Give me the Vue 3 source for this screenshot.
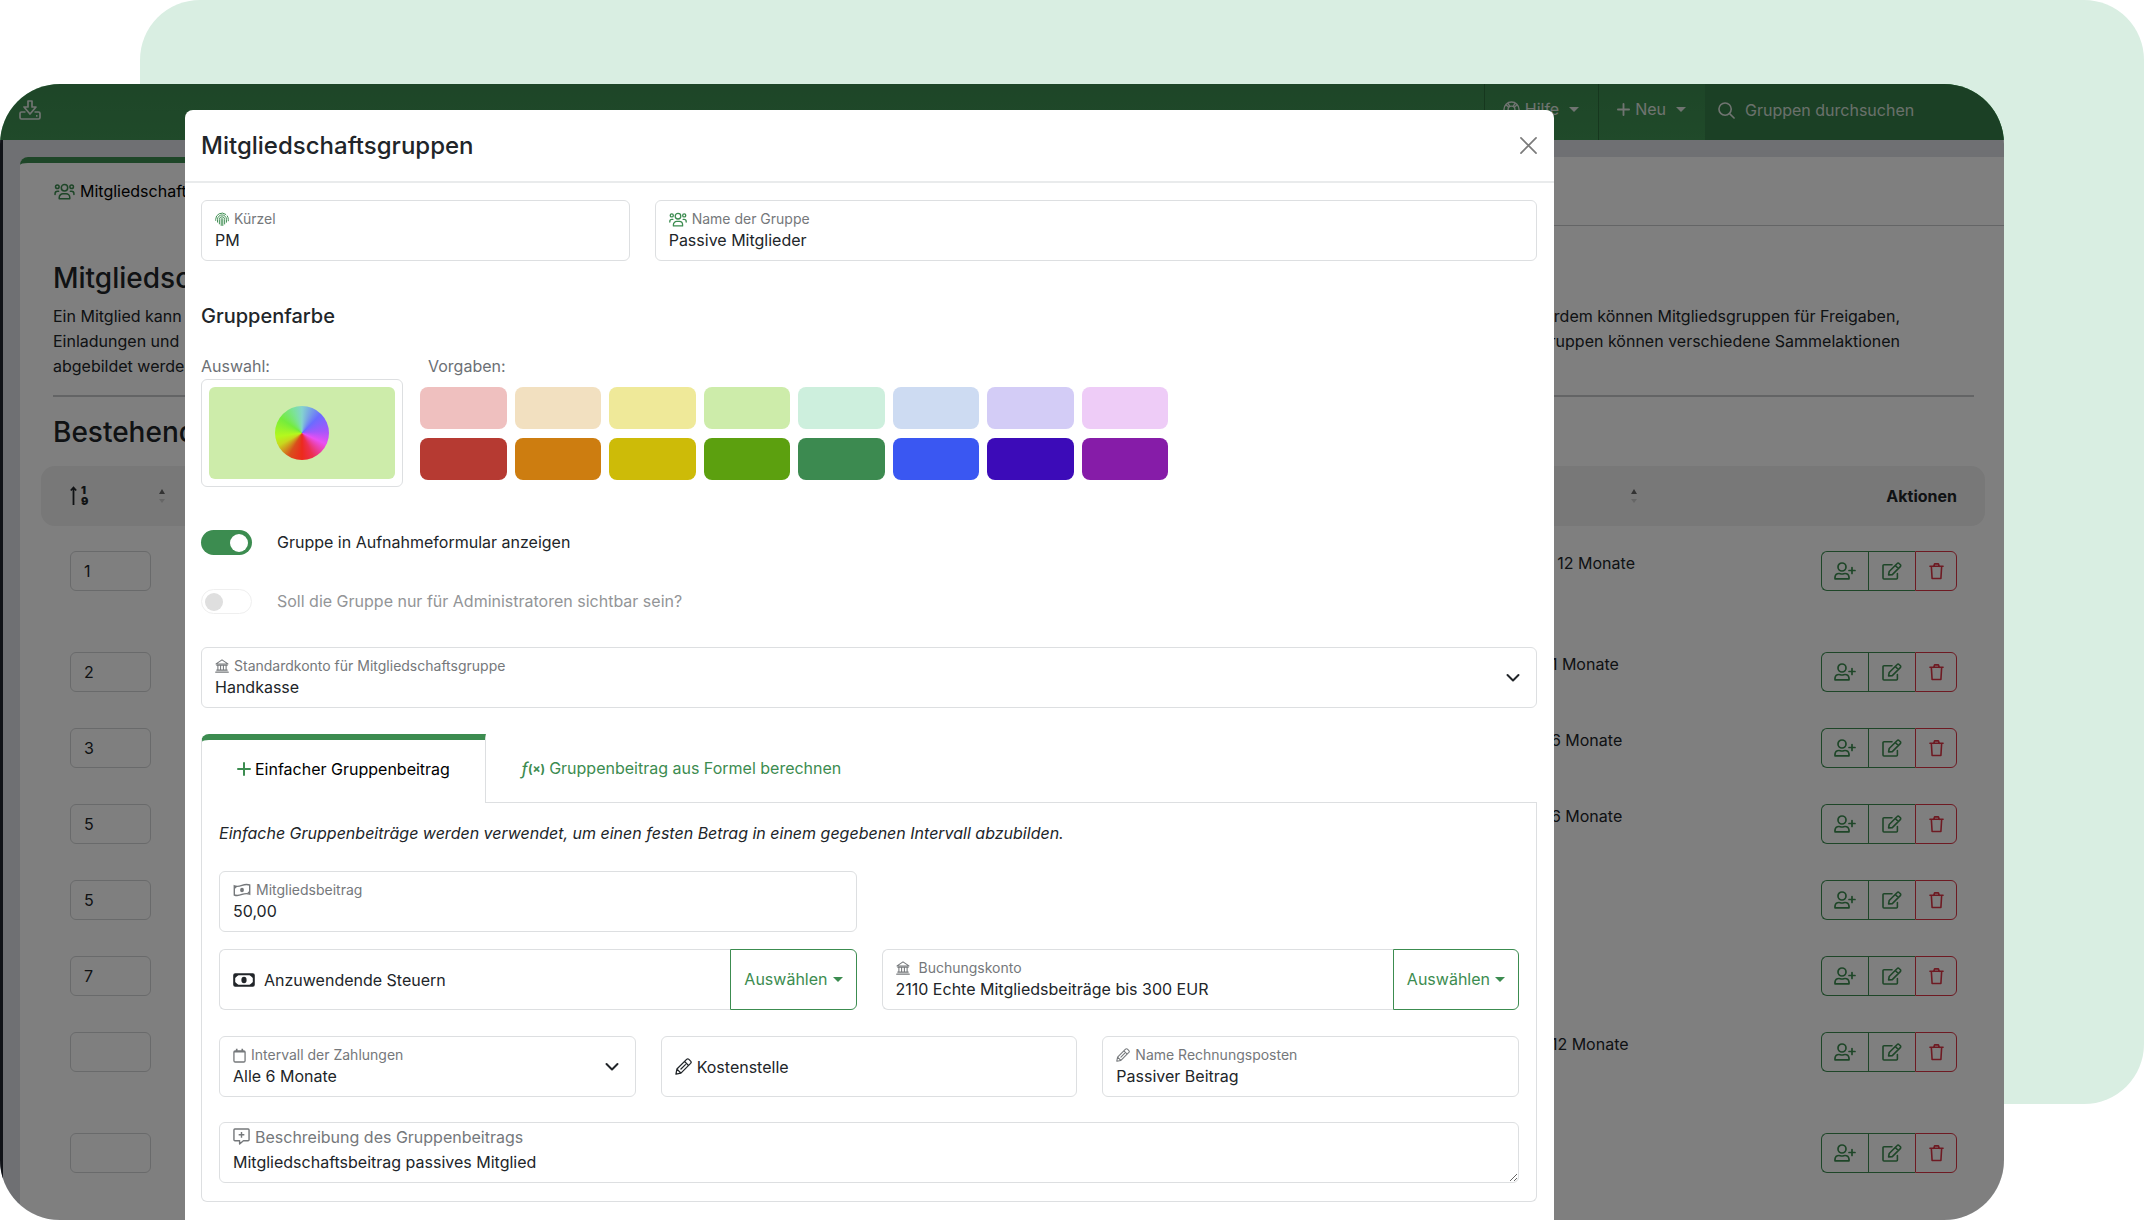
<script setup>
import { ref } from 'vue'

const rows = [
  { nr: '1', interval: '50,00 € / alle 12 Monate', tall: true },
  { nr: '2', interval: '11,00 € / alle 1 Monate' },
  { nr: '3', interval: '11,00 € / alle 6 Monate' },
  { nr: '5', interval: '11,00 € / alle 6 Monate' },
  { nr: '5', interval: '' },
  { nr: '7', interval: '' },
  { nr: '', interval: '11,00 € / alle 12 Monate', tall: true },
  { nr: '', interval: '' },
]

const swatches = [
  '#efc0bf', '#f2e0c0', '#efe999', '#cdecaa', '#cdefdd', '#cddbf2', '#d3ccf6', '#eeccf7',
  '#b63a32', '#cd7d10', '#cdbb08', '#5ca00f', '#3c8a50', '#3a57f2', '#3c0bb8', '#861ca8',
]

const selected = ref('#cdecaa')
const showInForm = ref(true)
const adminsOnly = ref(false)
const shortName = ref('PM')
const groupName = ref('Passive Mitglieder')
const fee = ref('50,00')
const account = ref('2110 Echte Mitgliedsbeiträge bis 300 EUR')
const taxes = ref('')
const costCenter = ref('')
const itemName = ref('Passiver Beitrag')
const description = ref('Mitgliedschaftsbeitrag passives Mitglied')
</script>

<template>
  <div class="page">
    <svg class="defs" width="0" height="0" aria-hidden="true">
      <symbol id="i-users" viewBox="0 0 22 18">
        <g fill="none" stroke="currentColor" stroke-width="1.6" stroke-linecap="round" stroke-linejoin="round">
          <circle cx="11" cy="5" r="3.4" /><circle cx="3.4" cy="4" r="1.9" /><circle cx="18.6" cy="4" r="1.9" />
          <path d="M5.400 16.800v-1.400a4 4 0 0 1 4-4h3.200a4 4 0 0 1 4 4v1.400z M1 12.200v-.8a2.600 2.600 0 0 1 2.600-2.600h1.200 M21 12.200v-.8a2.600 2.600 0 0 0-2.600-2.600h-1.200" />
        </g>
      </symbol>
      <symbol id="i-finger" viewBox="0 0 16 16">
        <g fill="none" stroke="currentColor" stroke-width="1.1" stroke-linecap="round">
          <path d="M.8 9V7.800A7.200 7.200 0 0 1 12.300 2.100 M14 3.900a7.200 7.200 0 0 1 1.200 4V9.500" />
          <path d="M2.900 11V7.900A5.100 5.100 0 0 1 8 2.800a5.100 5.100 0 0 1 5.100 5.100v3.200" />
          <path d="M5 13V7.900a3 3 0 0 1 6 0v5.200" />
          <path d="M7.100 14.800V7.900a.9.9 0 0 1 1.800 0v7" />
        </g>
      </symbol>
      <symbol id="i-bank" viewBox="0 0 16 16">
        <g fill="none" stroke="currentColor" stroke-width="1.2" stroke-linejoin="round" stroke-linecap="round">
          <path d="M1.200 5.600 8 1l6.800 4.600z M2 7.200h12 M3.300 7.500v5 M6.400 7.500v5 M9.600 7.500v5 M12.700 7.500v5 M2 12.700h12 M.8 15h14.400" />
        </g>
      </symbol>
      <symbol id="i-bill-wave" viewBox="0 0 20 16">
        <path d="M1.200 3.200c3 1.300 5.800.6 8.800-.5s5.800-1.500 8.800-.4v10.500c-3-1.100-5.800-.8-8.800.3s-5.800 1.800-8.800.6z" fill="none" stroke="currentColor" stroke-width="1.600" />
        <ellipse cx="10" cy="8" rx="2.200" ry="2.700" fill="currentColor" />
        <path d="M2 4.200h2.500L2 6.600z M18 12h-2.500L18 9.500z" fill="currentColor" />
      </symbol>
      <symbol id="i-bill" viewBox="0 0 22 16">
        <rect x="1.200" y="2.200" width="19.600" height="11.600" rx="1" fill="none" stroke="currentColor" stroke-width="2" />
        <ellipse cx="11" cy="8" rx="2.600" ry="3.200" fill="currentColor" />
        <path d="M2 3h3.500L2 6z M20 3h-3.500L20 6z M2 13h3.500L2 10z M20 13h-3.500L20 10z" fill="currentColor" />
      </symbol>
      <symbol id="i-calendar" viewBox="0 0 14 16">
        <rect x="1" y="3" width="12" height="12" rx="1.400" fill="none" stroke="currentColor" stroke-width="1.400" />
        <path d="M1 4h12 M4 .8v3 M10 .8v3" fill="none" stroke="currentColor" stroke-width="1.800" />
      </symbol>
      <symbol id="i-pencil" viewBox="0 0 16 16">
        <g fill="none" stroke="currentColor" stroke-width="1.200" stroke-linejoin="round" stroke-linecap="round">
          <path d="M.9 15.100l.9-4.700L10.900 1.300a1.600 1.600 0 0 1 2.200 0l1.600 1.600a1.600 1.600 0 0 1 0 2.200L5.600 14.200z M9 3.300l3.700 3.700 M1.900 10.500l3.600 3.600 M5.600 10.400l4.200-4.200" />
        </g>
      </symbol>
      <symbol id="i-comment" viewBox="0 0 18 18">
        <g fill="none" stroke="currentColor" stroke-width="1.500" stroke-linejoin="round">
          <path d="M2 1h14a1 1 0 0 1 1 1v10.500a1 1 0 0 1-1 1h-5L7 17v-3.500H2a1 1 0 0 1-1-1V2a1 1 0 0 1 1-1z M9 4.200v6 M6 7.200h6" />
        </g>
      </symbol>
      <symbol id="i-user-plus" viewBox="0 0 22 18">
        <g fill="none" stroke="currentColor" stroke-width="1.700" stroke-linejoin="round" stroke-linecap="round">
          <circle cx="8" cy="5" r="4" />
          <path d="M1 16.800V15a4 4 0 0 1 4-3.500c1 0 1.500.5 3 .5s2-.5 3-.5a4 4 0 0 1 4 3.500v1.800z M18 5.500v6 M15 8.500h6" />
        </g>
      </symbol>
      <symbol id="i-edit" viewBox="0 0 20 18">
        <g fill="none" stroke="currentColor" stroke-width="1.600" stroke-linejoin="round" stroke-linecap="round">
          <path d="M10 2.800H2a1 1 0 0 0-1 1V16a1 1 0 0 0 1 1h12.400a1 1 0 0 0 1-1v-4.500 M6.600 12.900l.6-3.400 8-8a1.300 1.300 0 0 1 1.900 0l1.200 1.200a1.300 1.300 0 0 1 0 1.900l-8 8z M13.300 3.500l3 3" />
        </g>
      </symbol>
      <symbol id="i-trash" viewBox="0 0 16 18">
        <g fill="none" stroke="currentColor" stroke-width="1.700" stroke-linejoin="round" stroke-linecap="round">
          <path d="M1 4h14 M5 4l1-2.600h4L11 4 M2.500 4l.8 13h9.400l.8-13" />
        </g>
      </symbol>
      <symbol id="i-plus" viewBox="0 0 14 14">
        <path d="M7 1v12 M1 7h12" fill="none" stroke="currentColor" stroke-width="2" stroke-linecap="round" />
      </symbol>
      <symbol id="i-search" viewBox="0 0 18 18">
        <path d="M12 12l5 5 M7.500 1a6.500 6.500 0 1 1 0 13 6.500 6.500 0 0 1 0-13z" fill="none" stroke="currentColor" stroke-width="1.700" stroke-linecap="round" />
      </symbol>
      <symbol id="i-ring" viewBox="0 0 18 18">
        <g fill="none" stroke="currentColor" stroke-width="1.500">
          <circle cx="9" cy="9" r="8" /><circle cx="9" cy="9" r="3.600" />
          <path d="M3 4l3.200 2.700 M5 2.200l2.200 3.200 M15 4l-3.200 2.700 M13 2.200l-2.200 3.200 M3 14l3.200-2.700 M15 14l-3.200-2.700" />
        </g>
      </symbol>
      <symbol id="i-inbox" viewBox="0 0 22 20">
        <g fill="none" stroke="currentColor" stroke-width="1.700" stroke-linejoin="round">
          <path d="M9 1h4v6h4L11 14 5 7h4z M6.500 12h-4A1.500 1.500 0 0 0 1 13.500v4A1.500 1.500 0 0 0 2.500 19h17a1.500 1.500 0 0 0 1.500-1.500v-4a1.500 1.500 0 0 0-1.500-1.500h-4 M17 15.800h1.500" />
        </g>
      </symbol>
      <symbol id="i-chevron" viewBox="0 0 14 10">
        <path d="M1.500 2l5.500 5.500L12.500 2" fill="none" stroke="currentColor" stroke-width="2" stroke-linecap="round" stroke-linejoin="round" />
      </symbol>
      <symbol id="i-close" viewBox="0 0 18 18">
        <path d="M1 1l16 16 M17 1L1 17" fill="none" stroke="currentColor" stroke-width="1.800" stroke-linecap="round" />
      </symbol>
    </svg>

    <div class="mint"></div>

    <div class="frame">
      <div class="app">
        <header class="topbar">
          <button class="inbox" type="button" aria-label="Posteingang"><svg width="22" height="20"><use href="#i-inbox" /></svg></button>
          <button class="menu" type="button"><svg width="17" height="17"><use href="#i-ring" /></svg>Hilfe<i class="caret"></i></button>
          <button class="menu" type="button"><svg width="13" height="13"><use href="#i-plus" /></svg>Neu<i class="caret"></i></button>
          <div class="search">
            <svg width="17" height="17"><use href="#i-search" /></svg>
            <input type="search" placeholder="Gruppen durchsuchen" aria-label="Gruppen durchsuchen" />
          </div>
        </header>

        <div class="shell">
          <main class="card">
            <nav class="card-tabs">
              <a href="#" class="card-tab"><svg width="21" height="17"><use href="#i-users" /></svg>Mitgliedschaftsgruppen</a>
            </nav>
            <div class="card-body">
              <h1>Mitgliedschaftsgruppen</h1>
              <div class="intro">
                <p><span>Ein Mitglied kann</span><span>Außerdem können Mitgliedsgruppen für Freigaben,</span></p>
                <p><span>Einladungen und</span><span>Gruppen können verschiedene Sammelaktionen</span></p>
                <p><span>abgebildet werden.</span></p>
              </div>
              <hr />
              <h1>Bestehende Gruppen</h1>
            </div>
            <table class="groups">
              <colgroup>
                <col class="c-nr" /><col /><col class="c-int" /><col class="c-act" />
              </colgroup>
              <thead>
                <tr>
                  <th scope="col">
                    <div class="sorter">
                      <span class="numsort">
                        <svg width="7" height="20" viewBox="0 0 7 20"><path d="M3.500 19V2 M.8 4.500l2.700-3 2.700 3" fill="none" stroke="currentColor" stroke-width="1.800" /></svg>
                        <span class="digits"><b>1</b><b>9</b></span>
                      </span>
                      <i class="arrows"></i>
                    </div>
                  </th>
                  <th></th>
                  <th scope="col"><div class="sorter end"><i class="arrows"></i></div></th>
                  <th scope="col" class="right">Aktionen</th>
                </tr>
              </thead>
              <tbody>
                <tr v-for="(row, i) in rows" :key="i" :class="{ tall: row.tall }">
                  <td><input class="nr" type="text" :value="row.nr" :aria-label="'Sortierung ' + (i + 1)" /></td>
                  <td></td>
                  <td class="interval">{{ row.interval }}</td>
                  <td class="right">
                    <div class="actions">
                      <button type="button" aria-label="Mitglied hinzufügen"><svg width="22" height="18"><use href="#i-user-plus" /></svg></button>
                      <button type="button" aria-label="Bearbeiten"><svg width="20" height="18"><use href="#i-edit" /></svg></button>
                      <button type="button" class="danger" aria-label="Löschen"><svg width="15" height="18"><use href="#i-trash" /></svg></button>
                    </div>
                  </td>
                </tr>
              </tbody>
            </table>
          </main>
        </div>
      </div>

      <div class="backdrop"></div>

      <section class="modal" role="dialog" aria-labelledby="dlg-title">
        <header class="modal-head">
          <h2 id="dlg-title">Mitgliedschaftsgruppen</h2>
          <button class="close" type="button" aria-label="Schließen"><svg width="17" height="17"><use href="#i-close" /></svg></button>
        </header>

        <div class="modal-body">
          <div class="row">
            <div class="field span4">
              <label for="f-short"><svg class="green" width="14" height="15"><use href="#i-finger" /></svg>Kürzel</label>
              <input id="f-short" v-model="shortName" type="text" />
            </div>
            <div class="field span8">
              <label for="f-name"><svg class="green" width="18" height="15"><use href="#i-users" /></svg>Name der Gruppe</label>
              <input id="f-name" v-model="groupName" type="text" />
            </div>
          </div>

          <h3>Gruppenfarbe</h3>
          <div class="colors">
            <div class="pick">
              <span class="cap">Auswahl:</span>
              <button class="picker" type="button" aria-label="Farbe wählen">
                <span class="fill" :style="{ background: selected }"><i class="wheel"></i></span>
              </button>
            </div>
            <div class="presets">
              <span class="cap">Vorgaben:</span>
              <div class="grid">
                <button v-for="c in swatches" :key="c" type="button" :aria-label="c" :style="{ background: c }" @click="selected = c"></button>
              </div>
            </div>
          </div>

          <div class="switches">
            <label class="switch"><input v-model="showInForm" type="checkbox" />Gruppe in Aufnahmeformular anzeigen</label>
            <label class="switch off"><input v-model="adminsOnly" type="checkbox" disabled />Soll die Gruppe nur für Administratoren sichtbar sein?</label>
          </div>

          <div class="field">
            <label for="f-acc"><svg width="14" height="14"><use href="#i-bank" /></svg>Standardkonto für Mitgliedschaftsgruppe</label>
            <select id="f-acc"><option>Handkasse</option></select>
            <svg class="chev" width="14" height="10"><use href="#i-chevron" /></svg>
          </div>

          <div class="tabs" role="tablist">
            <button class="tab active" type="button" role="tab" aria-selected="true"><svg class="green" width="14" height="14"><use href="#i-plus" /></svg>Einfacher Gruppenbeitrag</button>
            <button class="tab" type="button" role="tab" aria-selected="false"><span class="fx"><em>ƒ</em><b>(×)</b></span>Gruppenbeitrag aus Formel berechnen</button>
          </div>

          <div class="panel" role="tabpanel">
            <p class="hint">Einfache Gruppenbeiträge werden verwendet, um einen festen Betrag in einem gegebenen Intervall abzubilden.</p>

            <div class="row">
              <div class="field span6">
                <label for="f-fee"><svg width="18" height="14"><use href="#i-bill-wave" /></svg>Mitgliedsbeitrag</label>
                <input id="f-fee" v-model="fee" type="text" />
              </div>
            </div>

            <div class="row">
              <div class="group span6">
                <div class="field empty wide-gap">
                  <label for="f-tax"><svg width="22" height="16"><use href="#i-bill" /></svg>Anzuwendende Steuern</label>
                  <input id="f-tax" v-model="taxes" type="text" />
                </div>
                <button class="choose" type="button">Auswählen<i class="caret"></i></button>
              </div>
              <div class="group span6">
                <div class="field wide-gap">
                  <label for="f-book"><svg width="14" height="14"><use href="#i-bank" /></svg>Buchungskonto</label>
                  <input id="f-book" v-model="account" type="text" />
                </div>
                <button class="choose" type="button">Auswählen<i class="caret"></i></button>
              </div>
            </div>

            <div class="row spaced">
              <div class="field span4">
                <label for="f-int"><svg width="13" height="15"><use href="#i-calendar" /></svg>Intervall der Zahlungen</label>
                <select id="f-int"><option>Alle 6 Monate</option></select>
                <svg class="chev" width="14" height="10"><use href="#i-chevron" /></svg>
              </div>
              <div class="field empty span4">
                <label for="f-cost"><svg width="17" height="17"><use href="#i-pencil" /></svg>Kostenstelle</label>
                <input id="f-cost" v-model="costCenter" type="text" />
              </div>
              <div class="field span4">
                <label for="f-item"><svg width="14" height="14"><use href="#i-pencil" /></svg>Name Rechnungsposten</label>
                <input id="f-item" v-model="itemName" type="text" />
              </div>
            </div>

            <div class="field area">
              <label for="f-desc"><svg width="17" height="17"><use href="#i-comment" /></svg>Beschreibung des Gruppenbeitrags</label>
              <textarea id="f-desc" v-model="description" rows="1"></textarea>
            </div>
          </div>
        </div>
      </section>
    </div>
  </div>
</template>

<style>
body {
  margin: 0;
  background: #fff;
}
</style>

<style scoped>
* {
  box-sizing: border-box;
}
.page {
  --green: #3c8c50;
  --line: #dddfe1;
  display: grid;
  min-height: 100vh;
  font: 400 16px/25px Inter, "Noto Sans", sans-serif;
  color: #212529;
}
.defs {
  position: absolute;
}
button, input, select, textarea {
  font: inherit;
  color: inherit;
  margin: 0;
  padding: 0;
  border: 0;
  background: none;
  outline: none;
}
h1, h2, h3, p {
  margin: 0;
  font-weight: 500;
}
svg {
  flex: none;
  display: block;
}
.green {
  color: var(--green);
}
.caret {
  border: 5px solid transparent;
  border-top-color: currentColor;
  border-bottom: 0;
}
.mint {
  grid-area: 1 / 1;
  margin: 0 0 116px 140px;
  border-radius: 60px;
  background: #d9eee2;
}
.frame {
  grid-area: 1 / 1;
  margin: 84px 140px 0 0;
  border-radius: 60px;
  overflow: hidden;
  display: grid;
}
.app, .backdrop, .modal {
  grid-area: 1 / 1;
  min-width: 0;
}
.backdrop {
  background: rgba(0, 0, 0, 0.5);
}

/* application behind the dialog */
.app {
  display: flex;
  flex-direction: column;
  background: #fff;
}
.topbar {
  display: flex;
  height: 56px;
  background: linear-gradient(#3c8c50, #409454);
  color: #e0e8e2;
}
.inbox {
  margin-right: auto;
  padding: 0 0 5px 19px;
}
.menu {
  display: flex;
  align-items: center;
  gap: 5px;
  padding: 0 19px 5px 18px;
  border-left: 1px solid #2c6f3d;
}
.menu .caret {
  margin-left: 5px;
}
.search {
  display: flex;
  align-items: center;
  gap: 10px;
  width: 299px;
  padding: 0 13px 4px;
  background: #37804a;
}
.search input {
  flex: 1;
  min-width: 0;
}
.search input::placeholder {
  color: #d4e0d7;
  opacity: 1;
}
.shell {
  flex: 1;
  padding: 17px 0 0 17px;
  border-left: 3px solid #20242e;
  background: #dee1e6;
}
.card {
  min-height: 100%;
  background: #fff;
  border-radius: 8px 0 0 0;
}
.card-tabs {
  display: flex;
  height: 69px;
  border-bottom: 1px solid #c8cacc;
}
.card-tab {
  display: flex;
  align-items: center;
  gap: 5px;
  margin-bottom: -1px;
  padding: 0 34px 6px;
  border-top: 6px solid var(--green);
  border-radius: 8px 0 0 0;
  background: #fff;
  color: #000;
  text-decoration: none;
}
.card-tab svg {
  color: var(--green);
}
.card-body {
  padding: 34px 30px 0 33px;
}
h1 {
  font-size: 28px;
  line-height: 36px;
}
.intro {
  padding: 8px 74px 16px 0;
}
.intro p {
  display: flex;
  justify-content: space-between;
  font-weight: 400;
}
hr {
  margin: 0 0 17px;
  border: 0;
  border-top: 2px solid #c6c8ca;
}
.groups {
  width: calc(100% - 40px);
  margin: 16px 19px 0 21px;
  table-layout: fixed;
  border-spacing: 0;
}
.c-nr {
  width: 136px;
}
.c-int {
  width: 196px;
}
.c-act {
  width: 336px;
}
th {
  height: 60px;
  padding: 0 12px 0 29px;
  background: #f0f0f0;
  font-weight: 700;
  text-align: left;
}
th:first-child {
  border-radius: 14px 0 0 14px;
}
th:last-child {
  border-radius: 0 14px 14px 0;
}
td {
  height: 76px;
  padding: 25px 0 0 29px;
  vertical-align: top;
}
.tall td {
  height: 101px;
}
.interval {
  padding-left: 0;
  white-space: nowrap;
}
th.right, td.right {
  padding-right: 28px;
  text-align: right;
}
.sorter {
  display: flex;
  align-items: center;
  justify-content: space-between;
}
.sorter.end {
  justify-content: flex-end;
}
.numsort {
  display: flex;
  align-items: center;
  gap: 4px;
}
.digits {
  display: grid;
  font-size: 11px;
  line-height: 11px;
}
.arrows::before, .arrows::after {
  content: "";
  display: block;
  border: 3px solid transparent;
}
.arrows::before {
  border-bottom: 5px solid #666;
  border-top: 0;
}
.arrows::after {
  margin-top: 5px;
  border-top: 4px solid #ccc;
  border-bottom: 0;
}
.nr {
  display: block;
  width: 81px;
  height: 40px;
  padding: 0 13px;
  border: 1px solid #d2d4d6;
  border-radius: 6px;
}
.actions {
  display: inline-flex;
  vertical-align: top;
  height: 40px;
}
.actions button {
  display: grid;
  place-items: center;
  width: 47px;
  border: 1px solid var(--green);
  border-right: 0;
  color: var(--green);
}
.actions button:first-child {
  border-radius: 6px 0 0 6px;
}
.actions .danger {
  width: 42px;
  border: 1px solid #dc3545;
  border-radius: 0 6px 6px 0;
  color: #dc3545;
}

/* dialog */
.modal {
  margin: 26px 450px 0 185px;
  background: #fff;
  border-radius: 8px 8px 0 0;
}
.modal-head {
  display: flex;
  align-items: center;
  justify-content: space-between;
  height: 73px;
  padding: 0 17px 0 16px;
  border-bottom: 2px solid #e9ebec;
}
.modal-head h2 {
  font-size: 24px;
  line-height: 36px;
}
.close {
  color: #7b7b7b;
}
.modal-body {
  padding: 17px 17px 17px 16px;
}
.row {
  display: grid;
  grid-template-columns: repeat(12, minmax(0, 1fr));
  column-gap: 25px;
}
.span4 {
  grid-column: span 4;
}
.span6 {
  grid-column: span 6;
}
.span8 {
  grid-column: span 8;
}
.field {
  position: relative;
  height: 61px;
  padding: 8px 13px;
  border: 1px solid var(--line);
  border-radius: 6px;
}
.field label {
  display: flex;
  align-items: center;
  gap: 5px;
  height: 20px;
  font-size: 14px;
  line-height: 20px;
  color: #75787b;
}
.field input, .field select {
  display: block;
  width: 100%;
  height: 23px;
  line-height: 23px;
  appearance: none;
}
.field.wide-gap label {
  gap: 9px;
}
.field.empty {
  display: flex;
  align-items: center;
}
.field.empty label {
  flex: none;
  font-size: 16px;
  color: #212529;
}
.chev {
  position: absolute;
  right: 16px;
  top: 25px;
}
.field.area {
  padding: 1px 0 0;
}
.field.area label {
  height: 25px;
  padding: 0 13px;
  font-size: 16px;
}
.field.area textarea {
  display: block;
  width: 100%;
  height: 33px;
  padding: 0 13px;
  line-height: 27px;
  resize: vertical;
}
h3 {
  margin: 43px 0 25px;
  font-size: 20px;
}
.colors {
  display: flex;
  gap: 17px;
}
.cap {
  display: block;
  color: #6c7075;
}
.picker {
  display: block;
  width: 202px;
  height: 108px;
  padding: 7px;
  border: 1px solid var(--line);
  border-radius: 6px;
}
.fill {
  display: grid;
  place-items: center;
  height: 100%;
  border-radius: 6px;
}
.wheel {
  width: 54px;
  height: 54px;
  border-radius: 50%;
  background: conic-gradient(#84d3cf, #6a6cff 45deg, #a457fb 85deg, #ea50f2 115deg, #ec2f50 155deg, #ec2a1c 180deg, #d8501c 210deg, #c8d81e 242deg, #b4f81e 262deg, #74ec3c 305deg, #7ce29a 340deg, #84d3cf);
}
.presets .cap {
  padding-left: 8px;
}
.grid {
  display: grid;
  grid-template-columns: repeat(8, 1fr);
  grid-auto-rows: 42px;
  gap: 9px 8px;
  width: 748px;
  padding-top: 8px;
}
.grid button {
  border-radius: 8px;
}
.switches {
  display: grid;
  gap: 34px;
  margin: 43px 0 33px;
}
.switch {
  display: flex;
  align-items: center;
  gap: 25px;
}
.switch input {
  display: grid;
  align-items: center;
  width: 51px;
  height: 25px;
  padding: 0 4px;
  border-radius: 13px;
  background: var(--green);
  appearance: none;
}
.switch input::before {
  content: "";
  width: 18px;
  height: 18px;
  margin-left: auto;
  border-radius: 50%;
  background: #fff;
}
.switch.off {
  color: #939597;
}
.switch.off input {
  padding: 0 3px;
  border: 1px solid #efefef;
  background: #fff;
}
.switch.off input::before {
  margin-left: 0;
  background: #dfdfdf;
}
.tabs {
  display: flex;
  height: 69px;
  margin-top: 26px;
  border-bottom: 1px solid var(--line);
}
.tab {
  display: flex;
  align-items: center;
  gap: 4px;
  padding: 0 35px;
  color: var(--green);
}
.tab.active {
  margin-bottom: -1px;
  padding-bottom: 5px;
  border: 1px solid var(--line);
  border-top: 6px solid var(--green);
  border-bottom: 0;
  border-radius: 8px 0 0 0;
  background: #fff;
  color: #000;
}
.fx {
  display: flex;
  align-items: center;
}
.fx em {
  font-size: 18px;
}
.fx b {
  font-size: 12px;
}
.panel {
  padding: 18px 17px;
  border: 1px solid var(--line);
  border-top: 0;
  border-radius: 0 0 6px 6px;
}
.hint {
  margin-bottom: 25px;
  font-weight: 400;
  font-style: italic;
}
.panel .row {
  margin-bottom: 17px;
}
.panel .row.spaced {
  margin: 26px 0 25px;
}
.group {
  display: flex;
}
.group .field {
  flex: 1;
  min-width: 0;
  border-right: 0;
  border-radius: 6px 0 0 6px;
}
.choose {
  display: flex;
  align-items: center;
  gap: 5px;
  padding: 0 13px;
  border: 1px solid var(--green);
  border-radius: 0 6px 6px 0;
  color: var(--green);
}
</style>
